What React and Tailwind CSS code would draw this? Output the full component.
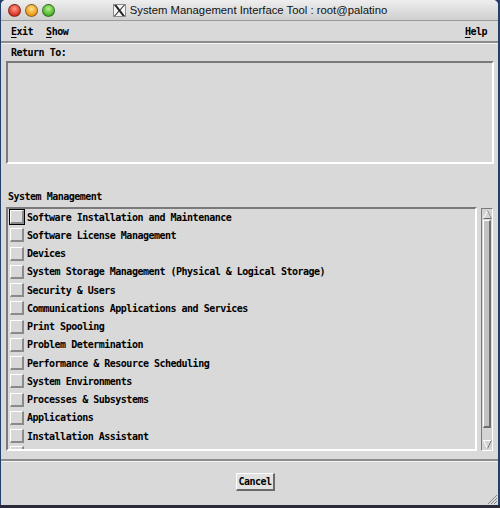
import React from 'react';

const items = [
  'Software Installation and Maintenance',
  'Software License Management',
  'Devices',
  'System Storage Management (Physical & Logical Storage)',
  'Security & Users',
  'Communications Applications and Services',
  'Print Spooling',
  'Problem Determination',
  'Performance & Resource Scheduling',
  'System Environments',
  'Processes & Subsystems',
  'Applications',
  'Installation Assistant',
];

const mono = "font-['DejaVu_Sans_Mono','Liberation_Mono',monospace] font-bold text-[10px] tracking-[-0.5px] text-black";

const Light = ({ color }) => (
  <div className={`w-[13px] h-[13px] rounded-full border border-black/40 ${color}`} />
);

const XLogo = () => (
  <div className="w-[13px] h-[13px] bg-[#f4f4f4] border border-[#8a8a8a] flex items-center justify-center">
    <svg width="11" height="11" viewBox="0 0 11 11">
      <polygon points="0,0 2.5,0 11,11 8.5,11" fill="#222" />
      <polygon points="11,0 9.8,0 0,11 1.2,11" fill="#222" />
    </svg>
  </div>
);

const TitleBar = () => (
  <div className="relative h-[21px] flex items-center bg-gradient-to-b from-[#eeeeee] to-[#cfcfcf] border-b border-[#9a9a9a] rounded-t-[5px]">
    <div className="flex items-center gap-[4px] pl-[7px]">
      <Light color="bg-[radial-gradient(circle_at_50%_35%,#ff9c8c,#d8301f_70%,#9e1a10)]" />
      <Light color="bg-[radial-gradient(circle_at_50%_35%,#ffe08a,#e9991b_70%,#a8650b)]" />
      <Light color="bg-[radial-gradient(circle_at_50%_35%,#b6f38a,#4bb02a_70%,#2b7416)]" />
    </div>
    <div className="absolute inset-0 flex items-center justify-center gap-[4px] pl-[1px]">
      <XLogo />
      <span className="font-['Lucida_Grande','Liberation_Sans',sans-serif] text-[11.3px] text-[#111]">
        System Management Interface Tool : root@palatino
      </span>
    </div>
  </div>
);

const MenuItem = ({ first, rest }) => (
  <span className={mono}>
    <span className="underline underline-offset-[2px]">{first}</span>
    {rest}
  </span>
);

// raised toggle box next to each list entry
const Toggle = ({ focused }) => (
  <div className={focused ? 'border border-black' : 'border border-transparent'}>
    <div className="w-[14px] h-[14px] bg-[#d8d8d8] border-t border-l border-t-white border-l-white border-b-2 border-r-2 border-b-[#8a8a8a] border-r-[#8a8a8a]" />
  </div>
);

const Scrollbar = () => (
  <div className="w-[12px] h-[243px] flex flex-col border-l border-t border-l-[#7a7a7a] border-t-[#7a7a7a] border-r border-b border-r-white border-b-white bg-[#d4d4d4]">
    <div className="h-[11px] flex items-center justify-center">
      <svg width="9" height="9" viewBox="0 0 9 9">
        <polygon points="4.5,0.5 8.5,8.5 0.5,8.5" fill="#d4d4d4" stroke="#ffffff" strokeWidth="1" />
        <line x1="0.5" y1="8.5" x2="8.5" y2="8.5" stroke="#6a6a6a" />
        <line x1="4.5" y1="0.5" x2="8.5" y2="8.5" stroke="#8a8a8a" />
      </svg>
    </div>
    <div className="h-[208px] mx-[1px] bg-[#c2c2c2] border-t border-l border-t-white border-l-white border-b-2 border-r-2 border-b-[#6e6e6e] border-r-[#6e6e6e]" />
    <div className="flex-1" />
    <div className="h-[11px] flex items-center justify-center">
      <svg width="9" height="9" viewBox="0 0 9 9">
        <polygon points="0.5,0.5 8.5,0.5 4.5,8.5" fill="#d4d4d4" stroke="#ffffff" strokeWidth="1" />
        <line x1="8.5" y1="0.5" x2="4.5" y2="8.5" stroke="#6a6a6a" />
      </svg>
    </div>
  </div>
);

const App = () => {
  return (
    <div className="w-[500px] h-[508px] bg-[#23406b] flex flex-col overflow-hidden">
      <div className="ml-px mr-[2px] h-[505px] flex flex-col bg-[#d9d9d9] rounded-t-[5px]">
        <TitleBar />

        <div className="h-[20px] flex items-center justify-between pl-[10px] pr-[11px]">
          <div className="flex gap-[13px]">
            <MenuItem first="E" rest="xit" />
            <MenuItem first="S" rest="how" />
          </div>
          <MenuItem first="H" rest="elp" />
        </div>
        <div className="h-[2px] bg-[#8c8c8c]" />
        <div className="h-px bg-[#f2f2f2]" />

        <div className="h-[17px] flex items-end pl-[10px] pb-[1px]">
          <span className={mono}>Return To:</span>
        </div>
        <div className="ml-[5px] mr-[4px] h-[103px] border-t-2 border-l-2 border-t-[#7a7a7a] border-l-[#7a7a7a] border-b-2 border-r-2 border-b-white border-r-white" />

        <div className="h-[43px] flex items-end pl-[7px] pb-[3px]">
          <span className={mono}>System Management</span>
        </div>

        <div className="flex ml-[5px] mr-[5px]">
          <div className="w-[471px] h-[244px] overflow-hidden border-t-2 border-l-2 border-t-[#7a7a7a] border-l-[#7a7a7a] border-b-2 border-r-2 border-b-white border-r-white pl-[1px]">
            <div className="-mt-px">
              {items.map((label, i) => (
                <div key={label} className="h-[18.25px] flex items-center gap-[2px]">
                  <Toggle focused={i === 0} />
                  <span className={mono}>{label}</span>
                </div>
              ))}
              <div className="h-[18px] flex items-start">
                <Toggle />
              </div>
            </div>
          </div>
          <div className="ml-[4px] mt-[1px]">
            <Scrollbar />
          </div>
        </div>

        <div className="mt-[8px] h-[2px] bg-[#8c8c8c]" />
        <div className="h-px bg-[#f2f2f2]" />

        <div className="relative flex-1 flex items-center justify-center pb-[3px] pl-[12px]">
          <button className={`${mono} h-[18px] px-[1px] bg-[#e2e2e2] border-t border-l border-t-white border-l-white border-b-2 border-r-2 border-b-[#6a6a6a] border-r-[#6a6a6a]`}>
            Cancel
          </button>
          <svg className="absolute right-[1px] bottom-[1px]" width="10" height="10" viewBox="0 0 10 10">
            <line x1="1" y1="10" x2="10" y2="1" stroke="#8a8a8a" />
            <line x1="4" y1="10" x2="10" y2="4" stroke="#8a8a8a" />
            <line x1="7" y1="10" x2="10" y2="7" stroke="#8a8a8a" />
          </svg>
        </div>
      </div>
      <div className="flex-1 bg-[#2a2a3a]" />
    </div>
  );
};

export default App;
